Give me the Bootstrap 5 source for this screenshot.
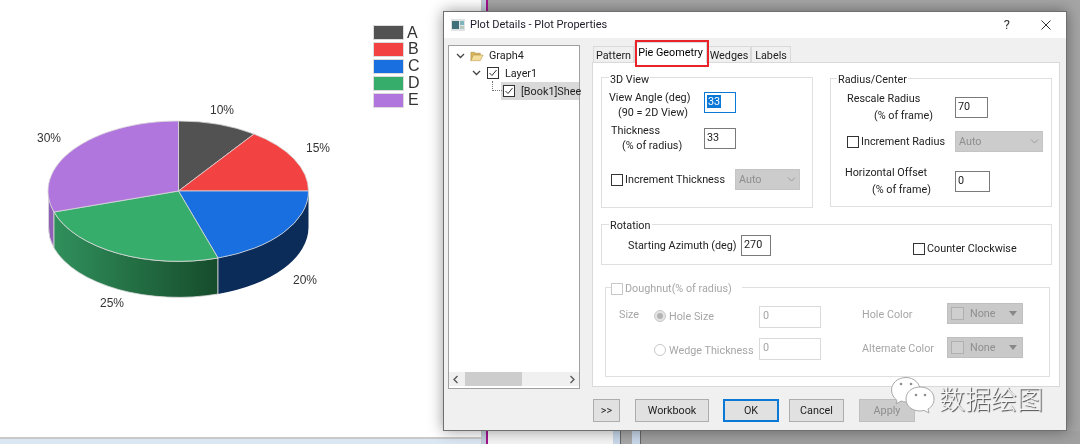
<!DOCTYPE html>
<html lang="en"><head><meta charset="utf-8"><title>Plot Details</title>
<link href="https://cdn.jsdelivr.net/npm/bootstrap@5.3.0/dist/css/bootstrap.min.css" rel="stylesheet">
<style>
html,body{margin:0;width:1080px;height:444px;overflow:hidden;background:#fff}
body{font-family:Roboto,"Noto Sans",sans-serif;font-size:10.8px;line-height:15px;color:#222}
.desk{width:1080px;height:444px;position:relative;filter:blur(.3px)}
.lefty{width:486px;flex:none}
.lmain{width:481px;flex:none}
.lslim{flex:1;background:#c3cede;border-left:1px solid #c9c9c9}
.lmain svg{display:block}
.lstrip{height:13px;background:linear-gradient(#fff 0 6px,#c9c9c9 6px 8px,#dce7f4 8px)}
.magbar{width:2px;background:#a3128f;flex:none}
.righty{background:#a5a5a5}
.rstrip{height:13px;margin-top:auto;flex:none}
.rs-a{width:125px;background:#f5f5f5}.rs-b{width:7px;background:#c8d8ea}.rs-c{width:12px;background:#a8a8a8;border-left:1px solid #666}.rs-d{width:8px;background:#c8d8ea}.rs-e{flex:1;background:#a0a0a0;border-left:1px solid #666}
.dlg{position:absolute;left:443px;top:11px;width:624px;height:420px;background:#f0f0f0;border:1px solid #6f6f6f;box-shadow:0 0 14px rgba(0,0,0,.4)}
.ttl{height:26px;background:#fff;padding:0 0 1px 7px}
.ttl-t{margin-left:5px;color:#1c1c2a;font-size:11px}
.ttl-h{font-size:13px;margin-right:31px;color:#333}
.ttl-x{margin-right:15px}
.tree{margin:7px 0 0 4px;width:132px;height:344px;background:#fff;border:1px solid #a0a0a0;position:relative;flex:none}
.tr{height:18px;white-space:nowrap}
.tr1{padding:1px 0 0 7px}
.tr2{padding-left:23px}
.tr3{margin-left:52px;background:#d9d9d9;padding-left:2px}
.tr svg{flex:none}
.fold{margin-left:1px;margin-right:1px}
.dots{position:absolute;left:43px;top:35px;width:10px;height:10px;border-left:1px dotted #777;border-bottom:1px dotted #777}
.sbar{position:absolute;left:0;right:0;bottom:2px;height:14px;background:#f0f0f0;padding:0 3px}
.thumb{width:57px;height:14px;background:#cdcdcd;margin-left:6px}
.cb{display:inline-block;width:12px;height:12px;border:1px solid #333;background:#fff;flex:none}
.cb-off{border-color:#c9c9c9}
.cbt2{margin-left:6px}.lay{margin-left:6px}.shn{margin-left:6px}
.rgt{margin-left:12px;width:468px;flex:none}
.nav-tabs.tabz{height:24px;padding-left:1px;border:0;align-items:flex-end;flex-wrap:nowrap;gap:0;position:relative;z-index:1}
.tabz .nav-link{font-size:10.8px;line-height:14px;padding:2px 0 0;height:16px;background:#f0f0f0;border:1px solid #dadada;border-bottom:0;border-radius:0;color:#222;margin:0;white-space:nowrap;text-align:center}
.tabz .nav-link.active{background:#fff;padding:3px 0 0;margin-bottom:-1px;height:21px;border-color:#dadada}
.t1{width:41px}.t2{width:73px}.t3{width:44px}.t4{width:40px}
.redbox{position:absolute;left:43px;top:2px;width:74px;height:27px;border:2px solid #e8232a;z-index:2}
.pnl{height:325px;background:#fff;border:1px solid #d9d9d9;position:relative}
.grp{border:1px solid #dfdfdf;position:relative;flex:none}
.gt{position:absolute;left:7px;top:-7px;background:#fff;padding:0 1px;white-space:nowrap;line-height:15px}
.g3d .gt{top:-6px}
.grd .gt{left:6px}
.g3d{width:212px;height:131px;margin:14px 0 0 8px;padding:12px 0 0 7px}
.grd{width:222px;height:129px;margin:15px 0 0 17px;padding:12px 0 0 16px}
.grot{width:451px;height:41px;margin:16px 0 0 8px;padding:10px 0 0 26px}
.gdn{width:445px;height:90px;margin:22px 0 0 12px;color:#a6a6a6}
.gdn .gt{left:5px;padding:0 10px 0 0;top:-7px;display:flex;align-items:center;gap:2px}
.fld{width:32px;height:21px;border:1px solid #7a7a7a;background:#fff;padding:1px 2px;flex:none;line-height:16px}
.fld.on{border-color:#0a78d7}
.sel{background:#0a78d7;color:#fff;padding:0 1px}
.fld.dis{border:1px solid #d9d9d9;color:#a6a6a6;width:62px;height:22px;padding:2px 3px;line-height:14px}
.sl{height:21px;background:#ccc;color:#8e8e8e;border:1px solid #c4c4c4;padding:0 3px;line-height:18px;flex:none}
.lb{flex:none}
.ind1{padding-left:9px}.ind2{padding-left:11px}.ind3{padding-left:27px;margin-top:2px}
.r1{width:95px}.r2{width:93px;margin-left:2px}
.row2{margin-top:3px}
.row3{margin-top:16px;margin-left:2px}
.mt2x{margin-top:2px}.mt5x{margin-top:5px}.mt6x{margin-top:6px}
.lt1{width:110px;margin-left:2px}.lt2{width:94px;margin-left:2px}
.w-sl1{width:65px}
.w-sl2{width:88px}
.rw{width:108px}.rw2{width:110px;margin-left:-2px}
.row-r2{margin-top:8px}.row-r3{margin-top:13px}
.f33{width:33px;height:21px}.f35{width:35px;height:21px}
.azl{width:113px;margin-top:3px}
.azi{width:30px;height:21px}
.ccw{margin-left:142px;margin-top:-2px;gap:2px}
.sz{width:48px;padding:19px 0 0 13px}
.r-col{width:105px;padding-top:20px}
.rad{width:12px;height:12px;border-radius:50%;border:1px solid #c9c9c9;background:#fff;display:inline-block;flex:none;position:relative}
.rad.chk{background:#e4e4e4}
.rad.chk::after{content:"";position:absolute;left:2px;top:2px;width:6px;height:6px;border-radius:50%;background:#b3b3b3}
.rad-r{gap:3px;height:16px}
.rad-r2{margin-top:18px}
.fld-col{padding-top:18px;width:103px}
.fld-col .fld+.fld{margin-top:10px}
.cl-col{width:85px;padding-top:19px}
.cl-col div+div{margin-top:19px}
.cs-col{padding-top:15px}
.cs{width:76px;height:21px;background:#c9c9c9;border:1px solid #bfbfbf;display:flex;align-items:center;padding-left:3px;color:#8f8f8f;gap:6px}
.cs+.cs{margin-top:13px}
.sw{width:13px;height:13px;border:1px solid #b0b0b0;background:#cfcfcf}
.caret{width:0;height:0;border:4px solid transparent;border-top:5px solid #888;border-bottom:0;margin-left:auto;margin-right:5px}
.foot{margin:10px 0 0 149px;gap:0}
.btn.pb{height:23px;font-size:10.8px;line-height:15px;padding:0;background:#e1e1e1;border:1px solid #adadad;border-radius:0;color:#222}
.btn.pb.ok{border:2px solid #0a78d7}
.btn.pb.off{background:#ccc;border-color:#bfbfbf;color:#8e8e8e;opacity:1}
.b1{width:27px}.b2{width:74px;margin-left:15px}.b3{width:56px;margin-left:14px}.b4{width:55px;margin-left:10px}.b5{width:56px;margin-left:15px}
.wm{position:absolute;left:891px;top:377px;z-index:5;gap:4px;pointer-events:none}
.wm-t{font-family:"Noto Sans CJK SC",sans-serif;font-weight:300;font-size:26px;line-height:31px;color:#f4f4f4;text-shadow:1px 1px 1px #444;margin-top:5px}
.ax{font-family:"Liberation Sans",Arial,sans-serif;font-size:12px;fill:#333}
.lg{font-family:"Liberation Sans",Arial,sans-serif;font-size:16px;fill:#333}
</style></head><body>
<div class="desk d-flex">
  <div class="lefty d-flex">
    <div class="lmain">
    <svg width="481" height="431" viewBox="0 0 481 431" role="img" aria-label="3D pie chart">
      <defs><linearGradient id="gs" x1="54" x2="218" y1="0" y2="0" gradientUnits="userSpaceOnUse"><stop offset="0" stop-color="#30905c"/><stop offset="1" stop-color="#164c2b"/></linearGradient></defs>
      <rect width="481" height="431" fill="#fff"/>
      <g stroke="#d8d8d8" stroke-width=".8">
      <path d="M48.500 191A130 70 0 0 0 54 212L54 248A130 70 0 0 1 48.500 227Z" fill="#8f60b6"/>
      <path d="M54 212A130 70 0 0 0 218 258L218 294A130 70 0 0 1 54 248Z" fill="url(#gs)"/>
      <path d="M218 258A130 70 0 0 0 308.500 191L308.500 227A130 70 0 0 1 218 294Z" fill="#0b2b59" stroke="none"/>
      <path d="M218 258V294" fill="none"/>
      <path d="M178.500 191L178.500 121A130 70 0 0 1 254 134Z" fill="#525252"/>
      <path d="M178.500 191L254 134A130 70 0 0 1 308.500 191Z" fill="#f34242"/>
      <path d="M178.500 191L308.500 191A130 70 0 0 1 218 258Z" fill="#1a6fe0"/>
      <path d="M178.500 191L218 258A130 70 0 0 1 54 212Z" fill="#36ad6b"/>
      <path d="M178.500 191L54 212A130 70 0 0 1 178.500 121Z" fill="#b176dd"/>
      </g>
      <g stroke="#dcdcdc" stroke-width="1">
      <rect x="373.500" y="25.500" width="30" height="14" fill="#525252"/>
      <rect x="373.500" y="42.500" width="30" height="14" fill="#f34242"/>
      <rect x="373.500" y="59.500" width="30" height="14" fill="#1a6fe0"/>
      <rect x="373.500" y="76.500" width="30" height="14" fill="#36ad6b"/>
      <rect x="373.500" y="93.500" width="30" height="14" fill="#b176dd"/>
      </g>
      <text class="lg" x="407" y="38">A</text><text class="lg" x="408" y="54">B</text><text class="lg" x="408" y="71">C</text><text class="lg" x="408" y="88">D</text><text class="lg" x="408" y="105">E</text>
      <text class="ax" x="210" y="114">10%</text><text class="ax" x="306" y="152">15%</text><text class="ax" x="293" y="284">20%</text><text class="ax" x="100" y="307">25%</text><text class="ax" x="37" y="142">30%</text>
    </svg>
    <div class="lstrip"></div>
    </div>
    <div class="lslim"></div>
  </div>
  <div class="magbar"></div>
  <div class="righty flex-grow-1 d-flex flex-column">
    <div class="rstrip d-flex"><div class="rs-a"></div><div class="rs-b"></div><div class="rs-c"></div><div class="rs-d"></div><div class="rs-e"></div></div>
  </div>

  <div class="dlg d-flex flex-column">
    <div class="ttl d-flex align-items-center">
      <svg width="14" height="12" viewBox="0 0 14 12"><rect width="14" height="12" fill="#dfe3e3"/><rect x="1" y="2" width="7" height="8" fill="#3f6f78"/><rect x="9" y="2" width="4" height="4" fill="#7fb5bd"/><rect x="9" y="7" width="4" height="3" fill="#b5c9c0"/></svg>
      <span class="ttl-t">Plot Details - Plot Properties</span>
      <span class="ttl-h ms-auto">?</span>
      <svg class="ttl-x" width="10" height="10" viewBox="0 0 10 10"><path d="M.5.5l9 9M9.500.5l-9 9" stroke="#333" stroke-width="1" fill="none"/></svg>
    </div>
    <div class="d-flex">
      <div class="tree">
        <div class="tr tr1 d-flex align-items-center gap-1">
          <svg width="9" height="6" viewBox="0 0 9 6"><path d="M1 1l3.500 3.500L8 1" stroke="#444" stroke-width="1.300" fill="none"/></svg>
          <svg class="fold" width="14" height="12" viewBox="0 0 15 12"><path d="M1 2h4l1 1h5v2H4L1 11Z" fill="#d9b65e" stroke="#a98a3a" stroke-width=".6"/><path d="M3.500 5H14l-3 6H1Z" fill="#f4dc9a" stroke="#b89a48" stroke-width=".6"/></svg>
          <span>Graph4</span>
        </div>
        <div class="tr tr2 d-flex align-items-center">
          <svg width="9" height="6" viewBox="0 0 9 6"><path d="M1 1l3.500 3.500L8 1" stroke="#444" stroke-width="1.300" fill="none"/></svg>
          <span class="cb cbt2 d-flex"><svg width="10" height="10" viewBox="0 0 10 10"><path d="M1.500 5l2.500 2.500L8.500 2" stroke="#333" fill="none"/></svg></span>
          <span class="lay">Layer1</span>
        </div>
        <div class="tr tr3 d-flex align-items-center">
          <span class="cb d-flex"><svg width="10" height="10" viewBox="0 0 10 10"><path d="M1.500 5l2.500 2.500L8.500 2" stroke="#333" fill="none"/></svg></span>
          <span class="shn">[Book1]Shee</span>
        </div>
        <div class="dots"></div>
        <div class="sbar d-flex align-items-center">
          <svg width="7" height="9" viewBox="0 0 7 9"><path d="M5.500 1l-3.500 3.500L5.500 8" stroke="#555" stroke-width="1.300" fill="none"/></svg>
          <div class="thumb"></div>
          <svg class="ms-auto" width="7" height="9" viewBox="0 0 7 9"><path d="M1.500 1l3.500 3.500L1.500 8" stroke="#555" stroke-width="1.300" fill="none"/></svg>
        </div>
      </div>
      <div class="rgt">
        <div class="position-relative">
          <ul class="nav nav-tabs tabz">
            <li class="nav-item"><a class="nav-link t1" href="#">Pattern</a></li>
            <li class="nav-item"><a class="nav-link active t2" href="#">Pie Geometry</a></li>
            <li class="nav-item"><a class="nav-link t3" href="#">Wedges</a></li>
            <li class="nav-item"><a class="nav-link t4" href="#">Labels</a></li>
          </ul>
          <div class="redbox"></div>
        </div>
        <div class="pnl d-flex flex-column">
          <div class="d-flex">
            <div class="grp g3d">
              <span class="gt">3D View</span>
              <div class="d-flex">
                <div class="lb r1"><div>View Angle (deg)</div><div class="ind1">(90 = 2D View)</div></div>
                <div class="fld on mt2x"><span class="sel">33</span></div>
              </div>
              <div class="d-flex row2">
                <div class="lb r2"><div>Thickness</div><div class="ind2">(% of radius)</div></div>
                <div class="fld mt5x">33</div>
              </div>
              <div class="d-flex align-items-center row3">
                <span class="cb"></span><span class="lb lt1">Increment Thickness</span>
                <div class="sl w-sl1 d-flex align-items-center justify-content-between">Auto<svg width="9" height="5" viewBox="0 0 9 5"><path d="M1 .5l3.500 3.500L8 .5" stroke="#999" fill="none"/></svg></div>
              </div>
            </div>
            <div class="grp grd">
              <span class="gt">Radius/Center</span>
              <div class="d-flex">
                <div class="lb rw"><div>Rescale Radius</div><div class="ind3">(% of frame)</div></div>
                <div class="fld f33 mt6x">70</div>
              </div>
              <div class="d-flex align-items-center row-r2">
                <span class="cb"></span><span class="lb lt2">Increment Radius</span>
                <div class="sl w-sl2 d-flex align-items-center justify-content-between">Auto<svg width="9" height="5" viewBox="0 0 9 5"><path d="M1 .5l3.500 3.500L8 .5" stroke="#999" fill="none"/></svg></div>
              </div>
              <div class="d-flex row-r3">
                <div class="lb rw2"><div>Horizontal Offset</div><div class="ind3">(% of frame)</div></div>
                <div class="fld f35 mt6x">0</div>
              </div>
            </div>
          </div>
          <div class="grp grot d-flex">
            <span class="gt">Rotation</span>
            <div class="lb azl">Starting Azimuth (deg)</div>
            <div class="fld azi">270</div>
            <div class="ccw d-flex align-items-center"><span class="cb"></span><span>Counter Clockwise</span></div>
          </div>
          <div class="grp gdn d-flex">
            <span class="gt"><span class="cb cb-off"></span><span>Doughnut(% of radius)</span></span>
            <div class="sz">Size</div>
            <div class="r-col">
              <div class="d-flex align-items-center rad-r"><span class="rad chk"></span><span>Hole Size</span></div>
              <div class="d-flex align-items-center rad-r rad-r2"><span class="rad"></span><span>Wedge Thickness</span></div>
            </div>
            <div class="fld-col"><div class="fld dis">0</div><div class="fld dis">0</div></div>
            <div class="cl-col"><div>Hole Color</div><div>Alternate Color</div></div>
            <div class="cs-col">
              <div class="cs"><span class="sw"></span><span>None</span><span class="caret"></span></div>
              <div class="cs"><span class="sw"></span><span>None</span><span class="caret"></span></div>
            </div>
          </div>
        </div>
      </div>
    </div>
    <div class="foot d-flex">
      <button class="btn pb b1">&gt;&gt;</button>
      <button class="btn pb b2">Workbook</button>
      <button class="btn pb ok b3">OK</button>
      <button class="btn pb b4">Cancel</button>
      <button class="btn pb off b5" disabled>Apply</button>
    </div>
  </div>

  <div class="wm d-flex">
    <svg width="44" height="37" viewBox="0 0 44 37"><g fill="#fff" stroke="#a8a8a8" stroke-width="1"><path d="M15 .5C7 .5.5 6 .5 13c0 4.500 2.500 8 5.500 10.500L5 27l5-3c2 .6 3.500 1 5 1 8 0 14-5.500 14-12S23 .5 15 .5Z"/><path d="M29 10c-8 0-14 5-14 12s6 12 14 12c1.500 0 3-.3 4-.6L38 36l-1-4c4-2 6-6 6-10 0-7-6-12-14-12Z"/></g><g fill="#8f8f8f"><circle cx="10" cy="7" r="1.300"/><circle cx="20" cy="7" r="1.300"/><circle cx="25" cy="18" r="1.300"/><circle cx="34" cy="18" r="1.300"/></g></svg>
    <div class="wm-t">数据绘图</div>
  </div>
</div>
<script src="https://cdn.jsdelivr.net/npm/bootstrap@5.3.0/dist/js/bootstrap.bundle.min.js"></script>
</body></html>
